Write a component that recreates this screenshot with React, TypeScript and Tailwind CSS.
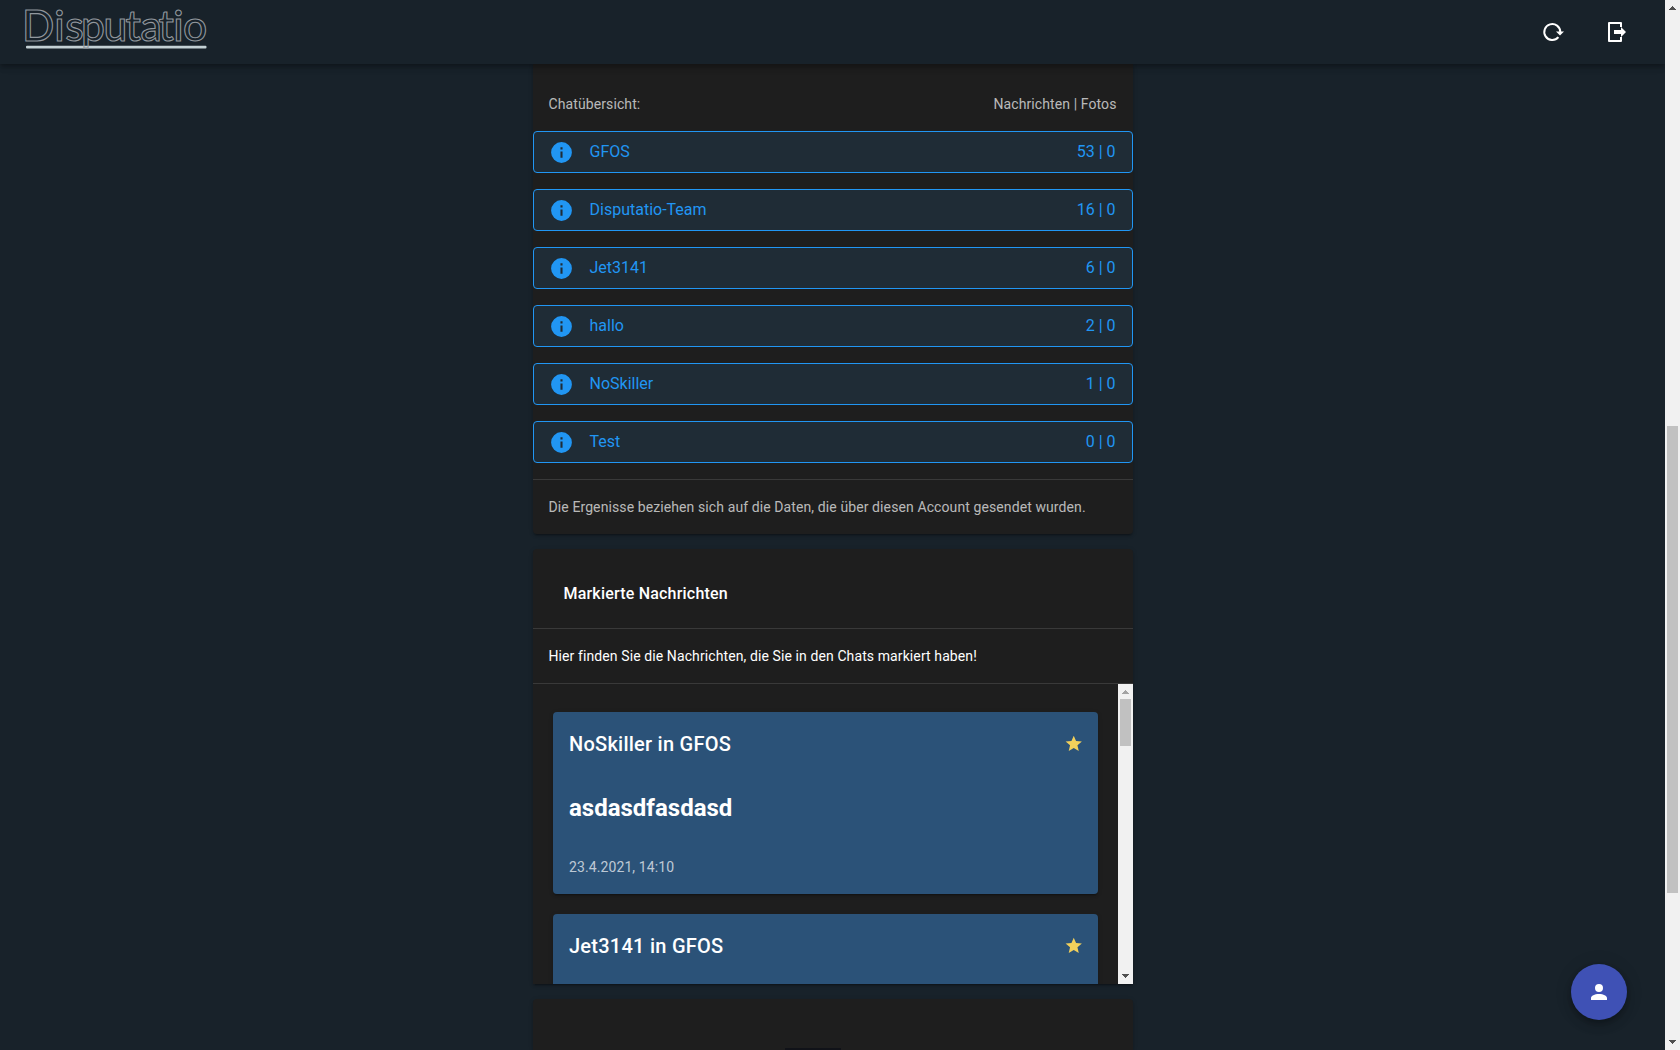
import React from "react";

const chats = [
  ["GFOS", "53 | 0"],
  ["Disputatio-Team", "16 | 0"],
  ["Jet3141", "6 | 0"],
  ["hallo", "2 | 0"],
  ["NoSkiller", "1 | 0"],
  ["Test", "0 | 0"],
];

const messages = [
  { title: "NoSkiller in GFOS", text: "asdasdfasdasd", date: "23.4.2021, 14:10" },
  { title: "Jet3141 in GFOS", text: "", date: "" },
];

const cardShadow =
  "shadow-[0_3px_1px_-2px_rgba(0,0,0,0.2),0_2px_2px_0_rgba(0,0,0,0.14),0_1px_5px_0_rgba(0,0,0,0.12)]";

function Icon({ d, className }: { d: string; className: string }) {
  return (
    <svg viewBox="0 0 24 24" className={className} fill="currentColor">
      <path d={d} />
    </svg>
  );
}

function Logo() {
  return (
    <svg width="190" height="64" viewBox="0 0 190 64" className="overflow-visible" aria-label="Disputatio">
      <rect x="6" y="45.7" width="180.5" height="2.8" rx="1" fill="#c3d0d4" />
      <text
        x="2 34.3 45.3 61 83.5 105.5 120.5 138.5 153.2 163"
        y="41.2"
        fontFamily="Lato, sans-serif"
        fontSize="42.5"
        fontWeight="500"
        fill="none"
        stroke="#92989e"
        strokeWidth="1.1"
      >
        Disputatio
      </text>
    </svg>
  );
}

function Arrow({ up, light }: { up?: boolean; light?: boolean }) {
  return (
    <svg
      width="15"
      height="15"
      viewBox="0 0 15 15"
      shapeRendering="crispEdges"
      className={light ? "shrink-0 text-[#a3a3a3]" : "shrink-0 text-[#505050]"}
    >
      <path fill="currentColor" d={up ? "M4 10h7v-1h-1v-1h-1v-1h-1v-1h-1v1h-1v1h-1v1h-1z" : "M4 5h7v1h-1v1h-1v1h-1v1h-1v-1h-1v-1h-1v-1h-1z"} />
    </svg>
  );
}

function Message({ title, text, date }: { title: string; text: string; date: string }) {
  return (
    <article className={`mx-5 mb-5 h-[182px] shrink-0 rounded bg-[#2b5278] pr-4 pl-[16.5px] ${cardShadow}`}>
      <div className="flex h-16 items-center justify-between">
        <h3 className="text-[20px] leading-8 font-medium tracking-[0.0125em]">{title}</h3>
        <Icon
          className="-mr-[2px] size-[19.5px] text-[#f2d05b]"
          d="M12,17.27L18.18,21L16.54,13.97L22,9.24L14.81,8.62L12,2L9.19,8.62L2,9.24L7.45,13.97L5.82,21L12,17.27Z"
        />
      </div>
      <p className="flex h-16 items-center text-[24px] leading-8 font-bold">{text}</p>
      <p className="flex h-[54px] items-center text-sm tracking-[0.1px] text-white/70">{date}</p>
    </article>
  );
}

export default function App() {
  return (
    <div className="flex h-[1050px] w-[1680px] overflow-hidden bg-[#18222a] font-['Roboto',sans-serif] text-white">
      <div className="relative flex w-[1665px] flex-col bg-[#18222a]">
        <header className="z-10 flex h-16 shrink-0 items-center justify-between bg-[#18222a] pr-9 pl-5 shadow-[0_2px_4px_-1px_rgba(0,0,0,0.2),0_4px_5px_0_rgba(0,0,0,0.14),0_1px_10px_0_rgba(0,0,0,0.12)]">
          <Logo />
          <div className="flex items-center gap-10">
            <svg width="24" height="24" viewBox="0 0 24 24">
              <path d="M17.4 17.2A8 8 0 1 1 19.3 12" fill="none" stroke="#fff" strokeWidth="2" />
              <path d="M15 11.4h8l-4 4z" fill="#fff" />
            </svg>
            <svg width="24" height="24" viewBox="0 0 24 24">
              <path d="M16 7V3H4v18h12v-4" fill="none" stroke="#fff" strokeWidth="2" strokeLinejoin="round" />
              <path d="M9 10.1h7V7l5 5-5 5v-3.1H9z" fill="#fff" />
            </svg>
          </div>
        </header>

        <main className="mx-auto flex w-[600px] flex-1 flex-col">
          <section className={`h-[470px] shrink-0 rounded-b bg-[#1e1e1e] ${cardShadow}`}>
            <div className="flex h-[67px] items-center justify-between px-4 pt-[13px] text-sm leading-[22px] tracking-[0.1px] text-white/70">
              <span>Chatübersicht:</span>
              <span>Nachrichten | Fotos</span>
            </div>
            <div className="flex flex-col gap-4">
              {chats.map(([name, count]) => (
                <div key={name} className="flex h-[42px] items-center rounded border border-[#2196f3] bg-[#1f2c36] px-4 text-[#2196f3]">
                  <Icon
                    className="-ml-px mr-4 size-[25px]"
                    d="M13,9H11V7H13M13,17H11V11H13M12,2A10,10 0 0,0 2,12A10,10 0 0,0 12,22A10,10 0 0,0 22,12A10,10 0 0,0 12,2Z"
                  />
                  <span className="flex-1">{name}</span>
                  <span>{count}</span>
                </div>
              ))}
            </div>
            <p className="mt-4 border-t border-white/12 px-4 py-4 text-sm leading-[22px] tracking-[0.1px] text-white/70">
              Die Ergenisse beziehen sich auf die Daten, die über diesen Account gesendet wurden.
            </p>
          </section>

          <section className={`mt-[15px] h-[435px] shrink-0 overflow-hidden rounded-t bg-[#1e1e1e] ${cardShadow}`}>
            <h2 className="flex h-[79px] items-center px-[31px] pt-[11px] text-base font-medium tracking-[0.0125em]">Markierte Nachrichten</h2>
            <p className="border-y border-white/12 px-4 py-4 text-sm leading-[22px] tracking-[0.1px]">
              Hier finden Sie die Nachrichten, die Sie in den Chats markiert haben!
            </p>
            <div className="flex h-[300px]">
              <div className="flex min-w-0 flex-1 flex-col overflow-hidden pt-7">
                {messages.map((m) => (
                  <Message key={m.title} {...m} />
                ))}
              </div>
              <div className="flex w-[15px] flex-col bg-[#f1f1f1]">
                <Arrow up light />
                <div className="mx-0.5 h-[47px] bg-[#c1c1c1]" />
                <div className="flex-1" />
                <Arrow />
              </div>
            </div>
          </section>

          <section className={`mt-[15px] flex flex-1 flex-col items-center justify-end rounded-t bg-[#1e1e1e] ${cardShadow}`}>
            <div className="mr-[40px] h-0.5 w-14 bg-[#101218]" />
          </section>
        </main>

        <button className="absolute right-[38px] bottom-[30px] flex size-14 items-center justify-center rounded-full bg-[#3f51b5] shadow-[0_3px_5px_-1px_rgba(0,0,0,0.2),0_6px_10px_0_rgba(0,0,0,0.14),0_1px_18px_0_rgba(0,0,0,0.12)]">
          <Icon
            className="size-6"
            d="M12,4A4,4 0 0,1 16,8A4,4 0 0,1 12,12A4,4 0 0,1 8,8A4,4 0 0,1 12,4M12,14C16.42,14 20,15.79 20,18V20H4V18C4,15.79 7.58,14 12,14Z"
          />
        </button>
      </div>

      <div className="z-20 flex w-[15px] flex-col bg-[#f1f1f1]">
        <Arrow up />
        <div className="mx-0.5 mt-[411px] h-[467px] bg-[#c1c1c1]" />
        <div className="flex-1" />
        <Arrow />
      </div>
    </div>
  );
}
